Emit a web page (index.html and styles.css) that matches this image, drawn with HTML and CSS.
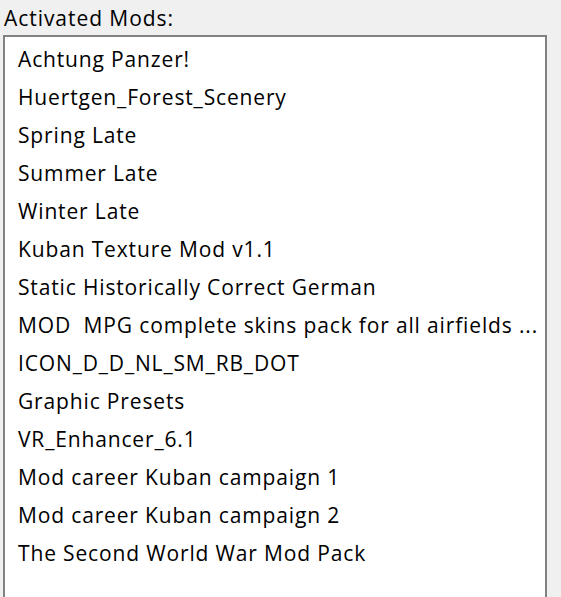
FILE: index.html
```html
<!DOCTYPE html>
<html>
<head>
<meta charset="utf-8">
<link rel="stylesheet" href="styles.css">
</head>
<body>
<div class="panel">
  <div class="label">Activated Mods:</div>
  <div class="listbox">
    <div class="item">Achtung Panzer!</div>
    <div class="item">Huertgen_Forest_Scenery</div>
    <div class="item">Spring Late</div>
    <div class="item">Summer Late</div>
    <div class="item">Winter Late</div>
    <div class="item">Kuban Texture Mod v1.1</div>
    <div class="item">Static Historically Correct German</div>
    <div class="item">MOD&nbsp; MPG complete skins pack for all airfields ...</div>
    <div class="item">ICON_D_D_NL_SM_RB_DOT</div>
    <div class="item">Graphic Presets</div>
    <div class="item">VR_Enhancer_6.1</div>
    <div class="item">Mod career Kuban campaign 1</div>
    <div class="item">Mod career Kuban campaign 2</div>
    <div class="item">The Second World War Mod Pack</div>
  </div>
</div>
</body>
</html>
```
FILE: styles.css
```css
html, body {
  margin: 0;
  padding: 0;
  background: #f0f0f0;
  overflow: hidden;
}
body {
  width: 561px;
  height: 597px;
  font-family: "Open Sans", "Noto Sans", sans-serif;
  color: #000;
}
.panel {
  padding: 0 0 0 3px;
  height: 597px;
  display: flex;
  flex-direction: column;
}
.label {
  font-size: 21px;
  letter-spacing: 0.95px;
  height: 35px;
  box-sizing: border-box;
  padding-top: 3px;
  line-height: 30px;
  padding-left: 1px;
  flex: none;
}
.listbox {
  width: 544px;
  flex: 1;
  background: #fff;
  border: 2px solid #828282;
  border-bottom: none;
  box-sizing: border-box;
  padding: 3px 0 0 13px;
}
.item {
  font-size: 21px;
  letter-spacing: 0.85px;
  height: 38px;
  line-height: 38px;
  white-space: nowrap;
}
```
